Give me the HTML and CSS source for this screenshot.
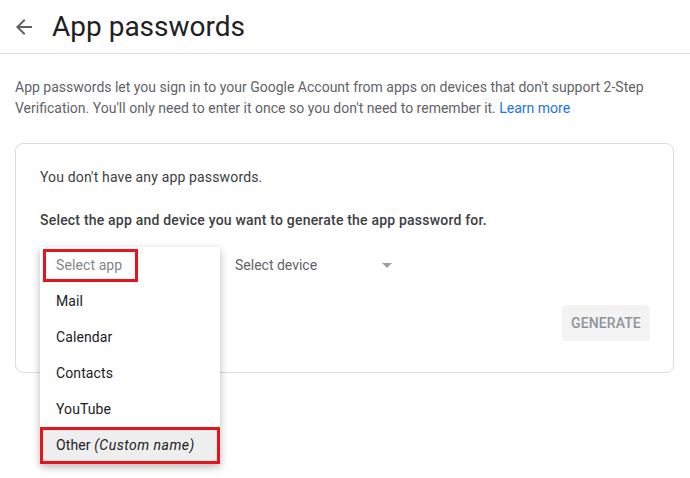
FILE: index.html
```html
<!DOCTYPE html>
<html lang="en">
<head>
<meta charset="utf-8">
<title>App passwords</title>
<link rel="stylesheet" href="styles.css">
</head>
<body>
<header class="topbar">
  <button class="back" aria-label="Back">
    <svg width="24" height="24" viewBox="0 0 24 24"><path d="M20 11H7.83l5.59-5.59L12 4l-8 8 8 8 1.41-1.41L7.83 13H20v-2z" fill="#5f6368"/></svg>
  </button>
  <h1 class="title">App passwords</h1>
</header>
<main class="content">
  <p class="intro">App passwords let you sign in to your Google Account from apps on devices that don't support 2-Step Verification. You'll only need to enter it once so you don't need to remember it. <a href="#" class="link">Learn more</a></p>
  <section class="card">
    <p class="empty">You don't have any app passwords.</p>
    <p class="prompt">Select the app and device you want to generate the app password for.</p>
    <div class="selects">
      <div class="select app-select">
        <ul class="menu">
          <li class="item placeholder"><span class="mark-small">Select app</span></li>
          <li class="item">Mail</li>
          <li class="item">Calendar</li>
          <li class="item">Contacts</li>
          <li class="item">YouTube</li>
          <li class="item active">Other <em>(Custom name)</em></li>
        </ul>
      </div>
      <div class="select device-select">
        <span class="device-label">Select device</span>
        <span class="caret"></span>
      </div>
    </div>
    <div class="actions">
      <button class="generate">GENERATE</button>
    </div>
  </section>
</main>
</body>
</html>
```
FILE: styles.css
```css
html, body {
  margin: 0;
  padding: 0;
  background: #fff;
}
body {
  font-family: Roboto, "Liberation Sans", Arial, sans-serif;
  color: #202124;
  width: 690px;
  height: 478px;
  overflow: hidden;
}
.topbar {
  display: flex;
  align-items: center;
  height: 53px;
  border-bottom: 1px solid #dadce0;
  padding-left: 12px;
  box-sizing: content-box;
}
.back {
  border: 0;
  background: none;
  padding: 0;
  margin: 1px 16px 0 0;
  width: 24px;
  height: 24px;
  display: flex;
}
.title {
  margin: 0;
  font-size: 28px;
  font-weight: 400;
  color: #202124;
  line-height: 36px;
}
.content {
  padding: 23px 16px 0 15px;
}
.intro {
  margin: 0;
  font-size: 14px;
  line-height: 21px;
  color: #5f6368;
}
.link {
  color: #1a73e8;
  text-decoration: none;
}
.card {
  margin-top: 24px;
  border: 1px solid #dadce0;
  border-radius: 8px;
  padding: 23px 23px 30px 24px;
  height: 175px;
  box-sizing: content-box;
}
.empty {
  margin: 0;
  font-size: 14px;
  line-height: 20px;
  color: #3c4043;
  letter-spacing: 0.15px;
}
.prompt {
  margin: 23px 0 0;
  font-size: 14px;
  line-height: 20px;
  font-weight: 500;
  color: #3c4043;
  letter-spacing: 0.2px;
}
.selects {
  display: flex;
  margin-top: 17px;
  height: 36px;
}
.select {
  height: 36px;
  font-size: 14px;
}
.app-select {
  width: 180px;
  position: relative;
}
.menu {
  position: absolute;
  left: 0;
  top: 0;
  z-index: 2;
  margin: 0;
  padding: 0;
  list-style: none;
  width: 180px;
  background: #fff;
  box-shadow: 0 3px 8px rgba(0, 0, 0, 0.28);
}
.item {
  height: 36px;
  line-height: 36px;
  padding-left: 16px;
  font-size: 14px;
  color: #202124;
  position: relative;
  letter-spacing: 0.1px;
}
.placeholder {
  color: #80868b;
}
.mark-small {
  position: relative;
  display: inline-block;
}
.mark-small::after {
  content: "";
  position: absolute;
  left: -13px;
  top: 2px;
  width: 95px;
  height: 33px;
  border: 3px solid #e8141c;
  box-sizing: border-box;
}
.active {
  background: #eeeeee;
  outline: 3px solid #e8141c;
  outline-offset: -3px;
  height: 37px;
}
.active em {
  font-style: italic;
  letter-spacing: 0.5px;
}
.device-select {
  width: 172px;
  box-sizing: border-box;
  padding-left: 15px;
  display: flex;
  align-items: center;
  justify-content: space-between;
  color: #5f6368;
}
.caret {
  width: 0;
  height: 0;
  border-left: 5px solid transparent;
  border-right: 5px solid transparent;
  border-top: 5px solid #9e9e9e;
  margin-top: 1px;
}
.actions {
  display: flex;
  justify-content: flex-end;
  margin-top: 22px;
}
.generate {
  width: 88px;
  height: 36px;
  border: 0;
  border-radius: 4px;
  background: #f3f3f3;
  color: #8f959b;
  font-family: Roboto, "Liberation Sans", Arial, sans-serif;
  font-size: 14px;
  font-weight: 500;
  letter-spacing: 0.1px;
  padding: 0;
}
```
